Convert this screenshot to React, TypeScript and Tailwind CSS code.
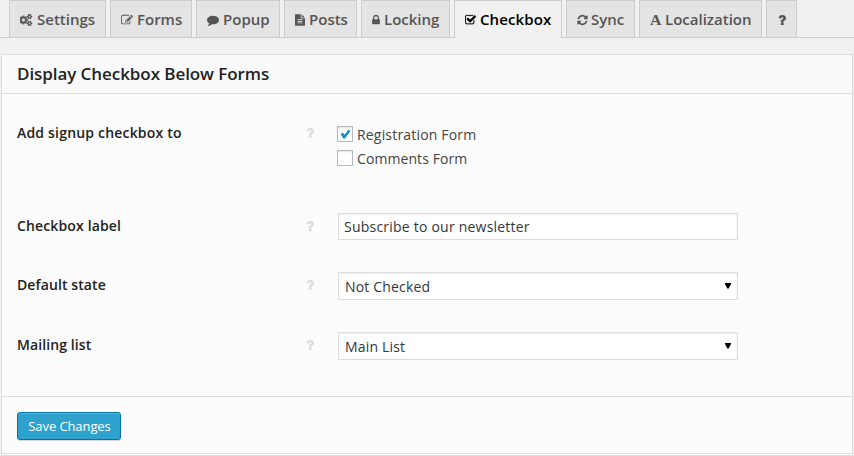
import type { ReactNode } from "react";

type Glyph = { box: string; width: string; d: string };

const glyphs: Record<string, Glyph> = {
  cogs: {
    box: "64 0 1920 1792",
    width: "w-[13px] stroke-current [stroke-width:50]",
    d: "M832 896q0-106-75-181t-181-75-181 75-75 181 75 181 181 75 181-75 75-181zm768 512q0-52-38-90t-90-38-90 38-38 90q0 53 37.5 90.5t90.5 37.5 90.5-37.5 37.5-90.5zm0-1024q0-52-38-90t-90-38-90 38-38 90q0 53 37.5 90.5t90.5 37.5 90.5-37.5 37.5-90.5zm-384 421v185q0 10-7 19.5t-16 10.5l-155 24q-11 35-32 76 34 48 90 115 7 11 7 20 0 12-7 19-23 30-82.5 89.5t-78.5 59.5q-11 0-21-7l-115-90q-37 19-77 31-11 108-23 155-7 24-30 24h-186q-11 0-20-7.5t-10-17.5l-23-153q-34-10-75-31l-118 89q-7 7-20 7-11 0-21-8-144-133-144-160 0-9 7-19 10-14 41-53t47-61q-23-44-35-82l-152-24q-10-1-17-9.5t-7-19.5v-185q0-10 7-19.5t16-10.5l155-24q11-35 32-76-34-48-90-115-7-11-7-20 0-12 7-20 22-30 82-89t79-59q11 0 21 7l115 90q34-18 77-32 11-108 23-154 7-24 30-24h186q11 0 20 7.5t10 17.5l23 153q34 10 75 31l118-89q8-7 20-7 11 0 21 8 144 133 144 160 0 8-7 19-12 16-42 54t-45 60q23 48 34 82l152 23q10 2 17 10.5t7 19.5zm640 533v140q0 16-149 31-12 27-30 52 51 113 51 138 0 4-4 7-122 71-124 71-8 0-46-47t-52-68q-20 2-30 2t-30-2q-14 21-52 68t-46 47q-2 0-124-71-4-3-4-7 0-25 51-138-18-25-30-52-149-15-149-31v-140q0-16 149-31 13-29 30-52-51-113-51-138 0-4 4-7 4-2 35-20t59-34 30-16q8 0 46 46.5t52 67.5q20-2 30-2t30 2q51-71 92-112l6-2q4 0 124 70 4 3 4 7 0 25-51 138 17 23 30 52 149 15 149 31zm0-1024v140q0 16-149 31-12 27-30 52 51 113 51 138 0 4-4 7-122 71-124 71-8 0-46-47t-52-68q-20 2-30 2t-30-2q-14 21-52 68t-46 47q-2 0-124-71-4-3-4-7 0-25 51-138-18-25-30-52-149-15-149-31v-140q0-16 149-31 13-29 30-52-51-113-51-138 0-4 4-7 4-2 35-20t59-34 30-16q8 0 46 46.5t52 67.5q20-2 30-2t30 2q51-71 92-112l6-2q4 0 124 70 4 3 4 7 0 25-51 138 17 23 30 52 149 15 149 31z",
  },
  edit: {
    box: "0 0 1792 1792",
    width: "w-[12px]",
    d: "M888 1184l116-116-152-152-116 116v56h96v96h56zm440-720q-16-16-33 1l-350 350q-17 17-1 33t33-1l350-350q17-17 1-33zm80 594v190q0 119-84.5 203.5t-203.5 84.5h-832q-119 0-203.5-84.5t-84.5-203.5v-832q0-119 84.5-203.5t203.5-84.5h832q63 0 117 25 15 7 18 23 3 17-9 29l-49 49q-14 14-32 8-23-6-45-6h-832q-66 0-113 47t-47 113v832q0 66 47 113t113 47h832q66 0 113-47t47-113v-126q0-13 9-22l64-64q15-15 35-7t20 29zm-96-738l288 288-672 672h-288v-288zm444 132l-92 92-288-288 92-92q28-28 68-28t68 28l152 152q28 28 28 68t-28 68z",
  },
  comment: {
    box: "0 0 1792 1792",
    width: "w-[12px]",
    d: "M1792 896q0 174-120 321.5t-326 233-450 85.5q-70 0-145-8-198 175-460 242-49 14-114 22-17 2-30.5-9t-17.5-29v-1q-3-4-.5-12t2-10 4.5-9.5l6-9 7-8.5 8-9q7-8 31-34.5t34.5-38 31-39.5 32.5-51 27-59 26-76q-157-89-247.5-220t-90.5-281q0-130 71-248.5t191-204.5 286-136.5 348-50.5q244 0 450 85.5t326 233 120 321.5z",
  },
  file: {
    box: "128 0 1536 1792",
    width: "w-[10px]",
    d: "M1596 476q14 14 28 36h-472v-472q22 14 36 28zm-476 164h544v1056q0 40-28 68t-68 28h-1344q-40 0-68-28t-28-68v-1600q0-40 28-68t68-28h800v544q0 40 28 68t68 28zm160 736v-64q0-14-9-23t-23-9h-704q-14 0-23 9t-9 23v64q0 14 9 23t23 9h704q14 0 23-9t9-23zm0-256v-64q0-14-9-23t-23-9h-704q-14 0-23 9t-9 23v64q0 14 9 23t23 9h704q14 0 23-9t9-23zm0-256v-64q0-14-9-23t-23-9h-704q-14 0-23 9t-9 23v64q0 14 9 23t23 9h704q14 0 23-9t9-23z",
  },
  lock: {
    box: "320 0 1152 1792",
    width: "w-[8px]",
    d: "M640 768h512v-192q0-106-75-181t-181-75-181 75-75 181v192zm832 96v576q0 40-28 68t-68 28h-960q-40 0-68-28t-28-68v-576q0-40 28-68t68-28h32v-192q0-184 132-316t316-132 316 132 132 316v192h32q40 0 68 28t28 68z",
  },
  check: {
    box: "64 0 1664 1792",
    width: "w-[11px] stroke-current [stroke-width:30]",
    d: "M1472 930v318q0 119-84.5 203.5t-203.5 84.5h-832q-119 0-203.5-84.5t-84.5-203.5v-832q0-119 84.5-203.5t203.5-84.5h832q63 0 117 25 15 7 18 23 3 17-9 29l-49 49q-10 10-23 10-3 0-9-2-23-6-45-6h-832q-66 0-113 47t-47 113v832q0 66 47 113t113 47h832q66 0 113-47t47-113v-254q0-13 9-22l64-64q10-10 23-10 6 0 12 3 20 8 20 29zm231-489l-814 814q-24 24-57 24t-57-24l-430-430q-24-24-24-57t24-57l110-110q24-24 57-24t57 24l263 263 647-647q24-24 57-24t57 24l110 110q24 24 24 57t-24 57z",
  },
  refresh: {
    box: "128 0 1536 1792",
    width: "w-[11px] -mr-px",
    d: "M1639 1056q0 5-1 7-64 268-268 434.5t-478 166.5q-146 0-282.5-55t-243.5-157l-129 129q-19 19-45 19t-45-19-19-45v-448q0-26 19-45t45-19h448q26 0 45 19t19 45-19 45l-137 137q71 66 161 102t187 36q134 0 250-65t186-179q11-17 53-117 8-23 30-23h192q13 0 22.5 9.5t9.5 22.5zm25-800v448q0 26-19 45t-45 19h-448q-26 0-45-19t-19-45 19-45l138-138q-148-137-349-137-134 0-250 65t-186 179q-11 17-53 117-8 23-30 23h-199q-13 0-22.5-9.5t-9.5-22.5v-7q65-268 270-434.5t480-166.5q146 0 284 55.5t245 156.5l130-129q19-19 45-19t45 19 19 45z",
  },
  question: {
    box: "384 256 1024 1280",
    width: "w-[8px] stroke-current [stroke-width:40]",
    d: "M1088 1256v240q0 16-12 28t-28 12h-240q-16 0-28-12t-12-28v-240q0-16 12-28t28-12h240q16 0 28 12t12 28zm316-600q0 54-15.5 101t-35 76.5-55 59.5-57.5 43.5-61 35.5q-41 23-68.5 65t-27.5 67q0 17-12 32.5t-28 15.5h-240q-15 0-25.5-18.5t-10.5-37.5v-45q0-83 65-156.5t143-108.5q59-27 84-56t25-76q0-42-46.5-74t-107.5-32q-65 0-108 29-35 25-107 115-13 16-31 16-12 0-25-8l-164-125q-13-10-15.5-25t5.5-28q160-266 464-266 80 0 161 31t146 83 106 127.5 41 158.5z",
  },
};

function Icon({ name, className = "h-[12px]" }: { name: string; className?: string }) {
  const g = glyphs[name];
  return (
    <svg viewBox={g.box} className={`shrink-0 fill-current ${g.width} ${className}`}>
      <path d={g.d} />
    </svg>
  );
}

const tabs = [
  { icon: "cogs", label: "Settings", width: "w-[97px]" },
  { icon: "edit", label: "Forms", width: "w-[82px]" },
  { icon: "comment", label: "Popup", width: "w-[84px]" },
  { icon: "file", label: "Posts", width: "w-[73px]" },
  { icon: "lock", label: "Locking", width: "w-[89px]" },
  { icon: "check", label: "Checkbox", width: "w-[108px]", active: true },
  { icon: "refresh", label: "Sync", width: "w-[69px]" },
  { icon: "font", label: "Localization", width: "w-[123px]" },
  { icon: "question", label: "", width: "w-[31px]" },
];

function Tab({ icon, label, width, active }: (typeof tabs)[number]) {
  const tone = active
    ? "h-[38px] bg-[#f1f1f1] text-black tracking-[0.1px]"
    : "h-[37px] bg-[#e4e4e4] text-[#555]";
  return (
    <div
      className={`flex shrink-0 gap-1 border border-b-0 border-[#ccc] pl-[10px] text-[15px] leading-[20px] font-semibold whitespace-nowrap ${width} ${tone}`}
    >
      {icon === "font" ? (
        <span className="mt-[9px] w-[11px] origin-left scale-x-105 font-['Liberation_Serif',serif] text-[15px] font-bold">
          A
        </span>
      ) : icon === "question" ? (
        <Icon name={icon} className="mt-[14px] ml-px h-[10px]" />
      ) : (
        <Icon name={icon} className="mt-[13px] h-[12px]" />
      )}
      {label && <span className="mt-[8px]">{label}</span>}
    </div>
  );
}

function Row({
  label,
  className,
  labelClass = "tracking-[0.1px]",
  children,
}: {
  label: string;
  className: string;
  labelClass?: string;
  children: ReactNode;
}) {
  return (
    <div className={`flex items-start pl-[15px] ${className}`}>
      <div className={`w-[289px] text-[14px] leading-[20px] font-semibold text-[#222] ${labelClass}`}>{label}</div>
      <Icon name="question" className="mt-[5px] h-[10px] text-[#ddd]" />
      {children}
    </div>
  );
}

function CheckItem({ label, checked, textClass }: { label: string; checked?: boolean; textClass: string }) {
  return (
    <label className="flex h-6 items-start gap-1 text-[14px] leading-[20px] text-[#444]">
      <span className="flex size-4 items-center justify-center border border-[#b4b9be] bg-white shadow-[inset_0_1px_2px_rgba(0,0,0,0.1)]">
        {checked && (
          <svg viewBox="0 0 14 14" className="size-[14px] fill-[#1e8cbe]">
            <path d="M2.6 7.2 4.8 5.6 6.4 7.8 10.4 2.8 12.6 3.8 7 11.4H5.3z" />
          </svg>
        )}
      </span>
      <span className={`-mt-px ${textClass}`}>{label}</span>
    </label>
  );
}

const field =
  "ml-[24px] flex w-[400px] border border-[#ddd] bg-white text-[14px] text-[#32373c] shadow-[inset_0_1px_2px_rgba(0,0,0,0.07)]";

function Select({ value }: { value: string }) {
  return (
    <div className={`${field} -mt-[3px] h-[28px] items-center justify-between pr-[6px] pl-[6px]`}>
      <span className="mt-px tracking-[0.17px]">{value}</span>
      <svg viewBox="0 0 6 6" className="mb-px h-[6px] w-[6px] fill-black">
        <path d="M0 0h6v1L3.7 5.5H2.3L0 1z" />
      </svg>
    </div>
  );
}

export default function App() {
  return (
    <div className="h-[456px] w-[854px] overflow-hidden bg-[#f1f1f1] font-['Open_Sans',sans-serif]">
      <nav className="flex h-[38px] gap-1 pl-[9px] shadow-[inset_0_-1px_0_#ccc]">
        {tabs.map((t) => (
          <Tab key={t.icon} {...t} />
        ))}
      </nav>
      <section className="mt-4 ml-px h-[402px] w-[852px] border border-[#ddd] bg-[#fcfcfc]">
        <h2 className="h-[39px] border-b border-[#ddd] bg-[#fafafa] pl-[15px] text-[17px] leading-[38px] font-semibold tracking-[-0.07px] text-[#222]">
          Display Checkbox Below Forms
        </h2>
        <Row label="Add signup checkbox to" labelClass="tracking-[0.19px]" className="mt-[29px] h-[93px]">
          <div className="mt-[3px] ml-[23px]">
            <CheckItem label="Registration Form" textClass="tracking-[0.18px]" checked />
            <CheckItem label="Comments Form" textClass="tracking-[0.08px]" />
          </div>
        </Row>
        <Row label="Checkbox label" labelClass="tracking-[0.14px]" className="h-[59px]">
          <div className={`${field} -mt-[3px] h-[27px] items-center pl-[5px] tracking-[0.22px]`}>
            Subscribe to our newsletter
          </div>
        </Row>
        <Row label="Default state" className="h-[60px]">
          <Select value="Not Checked" />
        </Row>
        <Row label="Mailing list" className="h-[61px]">
          <Select value="Main List" />
        </Row>
        <footer className="flex h-[58px] border-y border-[#ddd] pt-[15px] pl-[15px]">
          <button className="h-[28px] w-[104px] rounded-[3px] border border-[#0074a2] bg-[#2ea2cc] pl-px text-[13px] leading-[26px] tracking-[-0.09px] text-white shadow-[inset_0_1px_0_rgba(120,200,230,0.5),0_1px_0_rgba(0,0,0,0.15)]">
            Save Changes
          </button>
        </footer>
      </section>
    </div>
  );
}
